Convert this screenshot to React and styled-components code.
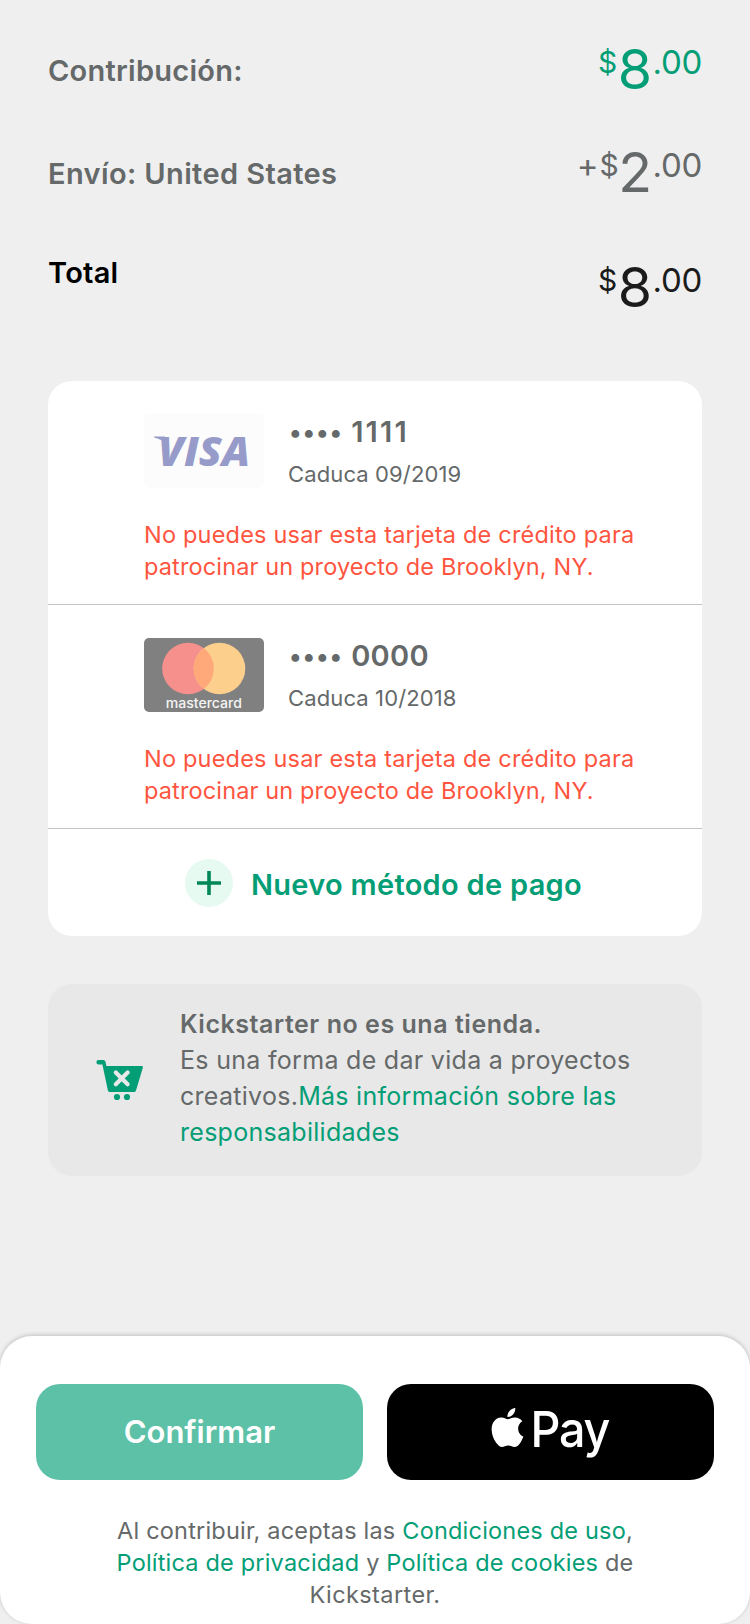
import React from 'react';
import styled, { createGlobalStyle } from 'styled-components';
import { SiApple } from 'react-icons/si';

const GREEN = '#049e76';
const GREY = '#656969';

const GlobalStyle = createGlobalStyle`
  *, *::before, *::after { box-sizing: border-box; }
  body {
    margin: 0;
    background: #efefef;
    color: ${GREY};
    font-family: Inter, 'Liberation Sans', sans-serif;
    font-kerning: normal;
  }
`;

const Page = styled.main`
  display: flex;
  flex-direction: column;
  width: 750px;
  height: 1624px;
  overflow: hidden;
`;

const Content = styled.div`
  flex: 1;
  display: flex;
  flex-direction: column;
  padding: 39px 48px 0;
`;

/* Summary */
const SummaryRow = styled.div`
  display: flex;
  justify-content: space-between;
  align-items: flex-start;
  height: 60px;
  margin-bottom: 43px;
`;

const TotalRow = styled(SummaryRow)`
  height: 63px;
  margin: 9px 0 64px;
`;

const Label = styled.span`
  padding-top: ${(p) => p.$drop ?? 14}px;
  font-size: 29px;
  font-weight: 600;
  line-height: 36px;
  letter-spacing: ${(p) => p.$track || 0.25}px;
  color: ${(p) => p.$color || GREY};
`;

const Amount = styled.span`
  display: flex;
  align-items: flex-start;
  padding-top: ${(p) => p.$drop || 0}px;
  color: ${(p) => p.$color || GREY};
`;

const Currency = styled.span`
  padding-top: 5px;
  margin-right: ${(p) => p.$gap}px;
  font-size: 30px;
  line-height: 36px;
`;

const Plus = styled.span`
  padding-top: 5px;
  margin-right: 1px;
  font-size: 33px;
  line-height: 36px;
`;

const Major = styled.span`
  margin-right: 0.5px;
  font-size: 55.5px;
  line-height: 60px;
`;

const Minor = styled.span`
  padding-top: 5px;
  font-size: 33px;
  line-height: 36px;
  letter-spacing: -0.3px;
`;

function Price({ plus, major, minor, color, drop }) {
  return (
    <Amount $color={color} $drop={drop}>
      {plus && <Plus>+</Plus>}
      <Currency $gap={plus ? -0.5 : 0.5}>$</Currency>
      <Major>{major}</Major>
      <Minor>{minor}</Minor>
    </Amount>
  );
}

/* Payment methods */
const MethodsCard = styled.section`
  height: 555px;
  border-radius: 24px;
  background: #fff;
  overflow: hidden;
`;

const Method = styled.article`
  height: 224px;
  padding: 33px 0 0 96px;
  border-bottom: 1px solid #c4c4c6;
`;

const MethodHeader = styled.div`
  display: flex;
  gap: 24px;
  height: 75px;
`;

const BrandArt = styled.svg`
  display: block;
  width: 120px;
  height: 74px;
  border-radius: 5px;
  background: ${(p) => p.$bg};
`;

const MethodInfo = styled.div`
  display: flex;
  flex-direction: column;
  gap: 10px;
`;

const CardNumber = styled.div`
  display: flex;
  padding-left: 1px;
  font-size: 29px;
  font-weight: 600;
  line-height: 36px;
`;

const Mask = styled.span`
  margin-right: 8px;
  font-size: 25px;
  letter-spacing: 0.95px;
`;

const Digits = styled.span`
  letter-spacing: ${(p) => p.$track}px;
`;

const Expiry = styled.div`
  font-size: 22px;
  line-height: 28px;
  letter-spacing: 0.12px;
`;

const Warning = styled.p`
  margin: 30px 0 0;
  font-size: 23.5px;
  line-height: 32px;
  color: #ff5540;
`;

const Line = styled.span`
  display: block;
  white-space: nowrap;
  letter-spacing: ${(p) => p.$track || 0}px;
  font-weight: ${(p) => (p.$strong ? 600 : 400)};
`;

const Link = styled.span`
  color: ${GREEN};
`;

const AddMethod = styled.div`
  display: flex;
  align-items: center;
  gap: 18px;
  height: 107px;
  padding-left: 137px;
`;

const AddBadge = styled.span`
  display: flex;
  align-items: center;
  justify-content: center;
  width: 48px;
  height: 48px;
  border-radius: 50%;
  background: #e6faf1;
`;

const AddLabel = styled.span`
  padding-top: 4px;
  font-size: 29px;
  font-weight: 600;
  line-height: 36px;
  letter-spacing: 0.29px;
  color: ${GREEN};
`;

/* Notice */
const Notice = styled.section`
  display: flex;
  gap: 36px;
  height: 192px;
  margin-top: 48px;
  padding-left: 48px;
  border-radius: 24px;
  background: #e8e8e8;
`;

const CartIcon = styled.svg`
  width: 48px;
  height: 48px;
  align-self: center;
`;

const NoticeText = styled.div`
  padding-top: 22px;
  font-size: 25px;
  line-height: 36px;
`;

/* Footer */
const Footer = styled.footer`
  height: 288px;
  padding: 48px 36px 0;
  border-radius: 32px;
  background: #fff;
  box-shadow: 0 -1px 4px rgba(0, 0, 0, 0.2);
`;

const Actions = styled.div`
  display: grid;
  grid-template-columns: 1fr 1fr;
  gap: 24px;
`;

const ActionButton = styled.button`
  display: flex;
  align-items: center;
  justify-content: center;
  height: 96px;
  padding: 0;
  border: 0;
  border-radius: 24px;
  background: ${(p) => p.$bg};
  color: #fff;
  font: 600 31px/36px Inter, 'Liberation Sans', sans-serif;
`;

const PayMark = styled.span`
  display: flex;
  align-items: center;
  gap: 3px;
`;

const AppleLogo = styled(SiApple)`
  width: 39px;
  height: 39px;
  margin-bottom: 10px;
`;

const PayWord = styled.svg`
  width: 84px;
  height: 78px;
  overflow: visible;
`;

const Legal = styled.p`
  margin: 35px 0 0;
  font-size: 23.5px;
  line-height: 32px;
  text-align: center;
`;

const Visa = () => (
  <BrandArt viewBox="0 0 120 74" $bg="#fcfcfc">
    <g fill="#979bc9">
      <path d="M10 22.4H21L23.5 32Q19 25 10 23.4Z" />
      <text
        x="14"
        y="51.5"
        fontFamily="'Open Sans', sans-serif"
        fontStyle="italic"
        fontWeight="800"
        fontSize="40.5"
        textLength="92"
        lengthAdjust="spacingAndGlyphs"
      >
        VISA
      </text>
    </g>
  </BrandArt>
);

const Mastercard = () => (
  <BrandArt viewBox="0 0 120 74" $bg="#808080">
    <circle cx="44" cy="30.5" r="25.8" fill="#f6908c" />
    <circle cx="75.5" cy="30.5" r="25.8" fill="#fccf8c" />
    <path d="M59.75 10A25.8 25.8 0 0 1 59.75 51A25.8 25.8 0 0 1 59.75 10Z" fill="#ffa97b" />
    <text
      x="21.7"
      y="69.5"
      fill="#f4f4f4"
      fontFamily="Inter, sans-serif"
      fontWeight="500"
      fontSize="13.5"
      textLength="76.3"
      lengthAdjust="spacingAndGlyphs"
    >
      mastercard
    </text>
  </BrandArt>
);

const Cart = () => (
  <CartIcon viewBox="0 0 48 48">
    <path
      d="M2.6 4H7.4Q9 4 9.4 5.6L10.4 10H46Q47.3 10 46.9 11.6L40 34.4Q39.5 36 38 36H13.4Q12.2 36 11.9 34.6L6.4 8.4H2.6A2.2 2.2 0 0 1 2.6 4Z"
      fill={GREEN}
    />
    <circle cx="21" cy="41" r="3.1" fill={GREEN} />
    <circle cx="31" cy="41" r="3.1" fill={GREEN} />
    <path d="M19.8 16.4L31.6 28.2M31.6 16.4L19.8 28.2" stroke="#e8e8e8" strokeWidth="4.2" strokeLinecap="round" />
  </CartIcon>
);

const METHODS = [
  { brand: Visa, last: '1111', track: 2.2, expiry: '09/2019' },
  { brand: Mastercard, last: '0000', track: 0.3, expiry: '10/2018' },
];

export default function App() {
  return (
    <Page>
      <GlobalStyle />
      <Content>
        <SummaryRow>
          <Label>Contribución:</Label>
          <Price major="8" minor=".00" color={GREEN} />
        </SummaryRow>
        <SummaryRow>
          <Label $track={0.38}>Envío: United States</Label>
          <Price plus major="2" minor=".00" />
        </SummaryRow>
        <TotalRow>
          <Label $drop={1} $color="#000">Total</Label>
          <Price major="8" minor=".00" color="#1b1b1b" drop={3} />
        </TotalRow>

        <MethodsCard>
          {METHODS.map(({ brand: Brand, last, track, expiry }) => (
            <Method key={last}>
              <MethodHeader>
                <Brand />
                <MethodInfo>
                  <CardNumber>
                    <Mask>••••</Mask>
                    <Digits $track={track}>{last}</Digits>
                  </CardNumber>
                  <Expiry>Caduca {expiry}</Expiry>
                </MethodInfo>
              </MethodHeader>
              <Warning>
                <Line $track={0.2}>No puedes usar esta tarjeta de crédito para</Line>
                <Line $track={0.14}>patrocinar un proyecto de Brooklyn, NY.</Line>
              </Warning>
            </Method>
          ))}
          <AddMethod>
            <AddBadge>
              <svg width="24" height="24" viewBox="0 0 24 24">
                <path d="M12 0V24M0 12H24" stroke="#028858" strokeWidth="3.6" />
              </svg>
            </AddBadge>
            <AddLabel>Nuevo método de pago</AddLabel>
          </AddMethod>
        </MethodsCard>

        <Notice>
          <Cart />
          <NoticeText>
            <Line $strong $track={0.54}>Kickstarter no es una tienda.</Line>
            <Line $track={0.3}>Es una forma de dar vida a proyectos</Line>
            <Line $track={0.28}>
              creativos.<Link>Más información sobre las</Link>
            </Line>
            <Line $track={0.28}>
              <Link>responsabilidades</Link>
            </Line>
          </NoticeText>
        </Notice>
      </Content>

      <Footer>
        <Actions>
          <ActionButton $bg="#5dc1a8">Confirmar</ActionButton>
          <ActionButton $bg="#000">
            <PayMark>
              <AppleLogo />
              <PayWord viewBox="0 0 84 78">
                <text
                  x="0.5"
                  y="53.5"
                  fill="#fff"
                  fontFamily="Inter, sans-serif"
                  fontWeight="500"
                  fontSize="50"
                  letterSpacing="-1.4"
                  textLength="78.5"
                  lengthAdjust="spacingAndGlyphs"
                >
                  Pay
                </text>
              </PayWord>
            </PayMark>
          </ActionButton>
        </Actions>
        <Legal>
          <Line $track={0.2}>
            Al contribuir, aceptas las <Link>Condiciones de uso</Link>,
          </Line>
          <Line $track={0.19}>
            <Link>Política de privacidad</Link> y <Link>Política de cookies</Link> de
          </Line>
          <Line $track={0.4}>Kickstarter.</Line>
        </Legal>
      </Footer>
    </Page>
  );
}
